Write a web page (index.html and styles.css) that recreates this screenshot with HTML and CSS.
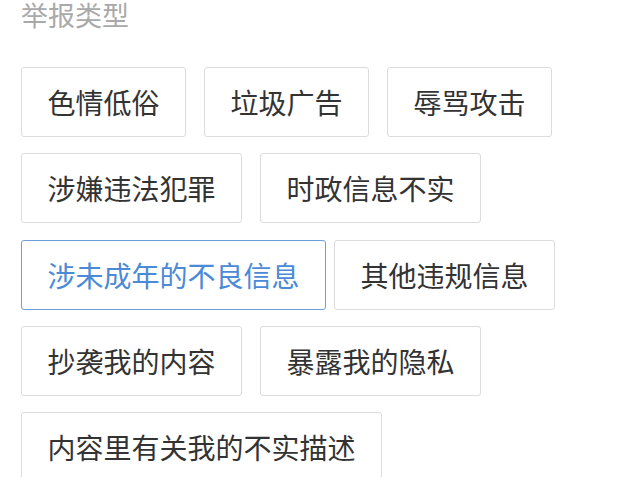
FILE: index.html
```html
<!DOCTYPE html>
<html>
<head>
    <meta charset="utf-8">
    <title>举报类型</title>
    <link rel="stylesheet" href="styles.css">
</head>
<body>
    <div class="report">
        <div class="report-title">举报类型</div>

        <div class="report-types">
            <button class="type-btn">色情低俗</button>
            <button class="type-btn">垃圾广告</button>
            <button class="type-btn">辱骂攻击</button>
            <button class="type-btn">涉嫌违法犯罪</button>
            <button class="type-btn">时政信息不实</button>
            <button class="type-btn active tight">涉未成年的不良信息</button>
            <button class="type-btn">其他违规信息</button>
            <button class="type-btn">抄袭我的内容</button>
            <button class="type-btn">暴露我的隐私</button>
            <button class="type-btn">内容里有关我的不实描述</button>
        </div>
    </div>
</body>
</html>
```

FILE: styles.css
```css
* {
    margin: 0;
    padding: 0;
    box-sizing: border-box;
    font-family: "Noto Sans CJK SC", "Noto Sans", sans-serif;
}

body {
    background-color: #fff;
    overflow: hidden;
}

.report {
    padding: 1px 20px 0 21px;
}

.report-title {
    font-size: 27px;
    line-height: 28px;
    color: #a9a9a9;
    margin-bottom: 38px;
}

.report-types {
    display: flex;
    flex-wrap: wrap;
    align-items: flex-start;
    height: 410px;
    overflow: hidden;
}

.type-btn {
    height: 70px;
    padding: 0 25.5px;
    margin: 0 18px 16.25px 0;
    border: 1px solid #dcdcdc;
    border-radius: 3px;
    background-color: #fff;
    color: #333;
    font-size: 28px;
    line-height: 1;
    white-space: nowrap;
    cursor: pointer;
}

.type-btn.active {
    border-color: #6f9fd8;
    color: #4a8ad6;
}

.type-btn.tight {
    margin-right: 8px;
}
```
